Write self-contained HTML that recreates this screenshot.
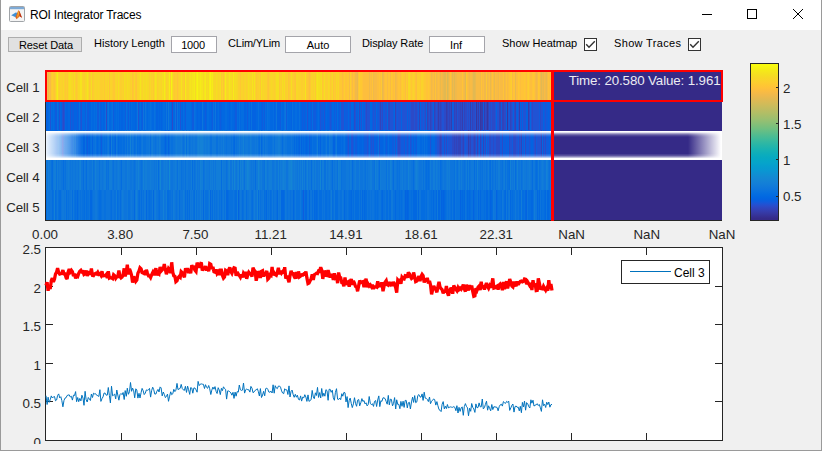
<!DOCTYPE html>
<html><head><meta charset="utf-8">
<style>
*{margin:0;padding:0;box-sizing:border-box}
html,body{width:822px;height:451px;overflow:hidden;background:#f0f0f0;font-family:"Liberation Sans",sans-serif;position:relative}
.a{position:absolute}
#title{left:0;top:0;width:822px;height:30px;background:#fff}
.bl{background:#9a9a9a}
.ttl{left:30px;top:7px;font-size:12px;letter-spacing:-0.2px;color:#000;white-space:nowrap;line-height:16px}
.ui{font-size:11px;color:#000;white-space:nowrap;line-height:13px}
.btn{background:#e1e1e1;border:1px solid #adadad}
.edit{background:#fff;border:1px solid #a4a4aa;text-align:center}
.chk{width:13px;height:13px;border:1px solid #333;background:#fff}
.cl{font-size:13.33px;letter-spacing:-0.15px;color:#262626;white-space:nowrap;line-height:16px;text-align:right;width:39.5px;left:0}
.xl{position:absolute;top:227px;width:80px;text-align:center;font-size:13.33px;color:#262626;line-height:16px;white-space:nowrap}
.yl{position:absolute;left:0;width:41px;text-align:right;font-size:13.33px;color:#262626;line-height:16px;white-space:nowrap}
.row{left:46px;width:506px;height:30px}
</style></head><body>
<div id="title" class="a"></div>
<!-- icon -->
<svg class="a" style="left:9px;top:6px" width="16" height="16" viewBox="0 0 16 16">
<rect x="0.5" y="0.5" width="15" height="15" rx="1" fill="#f4f4f4" stroke="#a0a4a8"/>
<rect x="1" y="1" width="14" height="2.2" fill="#7eaad6"/>
<path d="M2.2 9.3 L7.2 6.2 L8.6 8.2 L6.6 11.2 Z" fill="#3f8fd4"/>
<path d="M6.4 11.2 L9.3 4.2 L10.6 5.2 L13 11.8 L10.8 10.2 L7.6 13.2 Z" fill="#e0641c"/>
<path d="M10.2 5 L13 11.8 L11 10.4 Z" fill="#b5301a"/>
<path d="M8.2 10 L9.5 4.6 L10.1 7.2 L8.8 12.2 Z" fill="#f2b431"/>
</svg>
<div class="a ttl">ROI Integrator Traces</div>
<!-- window buttons -->
<div class="a" style="left:702px;top:14px;width:10px;height:1px;background:#000"></div>
<div class="a" style="left:747px;top:9px;width:10px;height:10px;border:1px solid #000"></div>
<svg class="a" style="left:792px;top:8px" width="12" height="12" viewBox="0 0 12 12"><path d="M1 1 L11 11 M11 1 L1 11" stroke="#000" stroke-width="1"/></svg>
<!-- borders -->
<div class="a bl" style="left:0;top:0;width:1px;height:451px"></div>
<div class="a bl" style="left:821px;top:0;width:1px;height:451px"></div>
<div class="a bl" style="left:0;top:450px;width:822px;height:1px"></div>

<!-- toolbar -->
<div class="a btn ui" style="left:8px;top:37px;width:74px;height:15px;text-align:center;padding-top:1px;padding-left:2px;letter-spacing:-0.1px">Reset Data</div>
<div class="a ui" style="left:94px;top:37px">History Length</div>
<div class="a edit ui" style="left:171px;top:36px;width:46px;height:17px;padding-top:2px;padding-right:2px;letter-spacing:-0.2px">1000</div>
<div class="a ui" style="left:228px;top:37px;letter-spacing:-0.2px">CLim/YLim</div>
<div class="a edit ui" style="left:285px;top:36px;width:66px;height:17px;padding-top:2px">Auto</div>
<div class="a ui" style="left:362px;top:37px;letter-spacing:-0.1px">Display Rate</div>
<div class="a edit ui" style="left:429px;top:36px;width:56px;height:17px;padding-top:2px;padding-right:2px">Inf</div>
<div class="a ui" style="left:502px;top:37px">Show Heatmap</div>
<div class="a chk" style="left:584px;top:38px"></div>
<svg class="a" style="left:584px;top:38px" width="13" height="13"><path d="M2.2 6.3 L5 9.3 L10.8 3.2" fill="none" stroke="#333" stroke-width="1.4"/></svg>
<div class="a ui" style="left:614px;top:37px;letter-spacing:0.35px">Show Traces</div>
<div class="a chk" style="left:688px;top:38px"></div>
<svg class="a" style="left:688px;top:38px" width="13" height="13"><path d="M2.2 6.3 L5 9.3 L10.8 3.2" fill="none" stroke="#333" stroke-width="1.4"/></svg>

<!-- heatmap -->
<div class="a row" style="top:70px;background:linear-gradient(90deg,#ffc337 0px 1px,#f8bb44 1px 2px,#e9b94e 2px 3px,#fdbe3d 3px 4px,#f8bb44 4px 5px,#fec832 5px 6px,#fcce2e 6px 7px,#fec832 7px 8px,#ffc337 8px 9px,#fcce2e 9px 10px,#f5de21 10px 11px,#f5eb18 11px 12px,#fad32a 12px 13px,#fcce2e 13px 14px,#fad32a 14px 16px,#fcce2e 16px 17px,#f7d826 17px 18px,#fcce2e 18px 19px,#fec832 19px 20px,#fcce2e 20px 21px,#fec832 21px 22px,#f7d826 22px 23px,#f5de21 23px 25px,#f7d826 25px 27px,#fcce2e 27px 28px,#f5de21 28px 29px,#fcce2e 29px 30px,#fec832 30px 31px,#fcce2e 31px 32px,#f7d826 32px 34px,#f5e41d 34px 36px,#fad32a 36px 38px,#fcce2e 38px 39px,#f7d826 39px 41px,#f5e41d 41px 42px,#f7d826 42px 43px,#fec832 43px 44px,#fcce2e 44px 45px,#f5de21 45px 46px,#fec832 46px 47px,#fcce2e 47px 48px,#fad32a 48px 49px,#f7d826 49px 50px,#fad32a 50px 52px,#f7d826 52px 53px,#fad32a 53px 54px,#fcce2e 54px 57px,#fad32a 57px 58px,#fec832 58px 59px,#fad32a 59px 61px,#fcce2e 61px 62px,#f7d826 62px 63px,#ffc337 63px 64px,#fad32a 64px 66px,#fcce2e 66px 67px,#fec832 67px 69px,#fad32a 69px 70px,#f7d826 70px 71px,#fcce2e 71px 72px,#f5de21 72px 73px,#fad32a 73px 74px,#fcce2e 74px 76px,#fad32a 76px 77px,#fcce2e 77px 78px,#f5de21 78px 79px,#f7d826 79px 80px,#fad32a 80px 81px,#f5de21 81px 82px,#f7d826 82px 84px,#fcce2e 84px 85px,#fad32a 85px 86px,#ffc337 86px 87px,#fec832 87px 88px,#f7d826 88px 89px,#fec832 89px 90px,#ffc337 90px 91px,#fad32a 91px 93px,#f7d826 93px 94px,#f5e41d 94px 95px,#f7d826 95px 96px,#fad32a 96px 97px,#f5de21 97px 98px,#f7d826 98px 100px,#f5de21 100px 101px,#f7d826 101px 103px,#fcce2e 103px 104px,#f7d826 104px 105px,#fcce2e 105px 106px,#fad32a 106px 107px,#fec832 107px 108px,#f7d826 108px 109px,#f5e41d 109px 110px,#f5de21 110px 111px,#fcce2e 111px 112px,#fad32a 112px 113px,#f7d826 113px 115px,#fad32a 115px 116px,#f5de21 116px 117px,#f7d826 117px 118px,#f5eb18 118px 119px,#f5de21 119px 120px,#fcce2e 120px 121px,#fad32a 121px 122px,#f7d826 122px 123px,#f5eb18 123px 124px,#fcce2e 124px 125px,#f6f313 125px 126px,#f5de21 126px 127px,#fcce2e 127px 128px,#fec832 128px 129px,#fcce2e 129px 131px,#ffc337 131px 132px,#fcce2e 132px 133px,#fad32a 133px 135px,#f5e41d 135px 136px,#fad32a 136px 138px,#fec832 138px 139px,#f5eb18 139px 140px,#f7d826 140px 141px,#fad32a 141px 143px,#f5de21 143px 144px,#f5e41d 144px 145px,#f5de21 145px 146px,#f5e41d 146px 148px,#f5eb18 148px 149px,#f7d826 149px 150px,#f5eb18 150px 151px,#f6f313 151px 152px,#f5e41d 152px 154px,#f5eb18 154px 155px,#f5e41d 155px 157px,#f7d826 157px 158px,#f5e41d 158px 159px,#f5eb18 159px 160px,#f7d826 160px 161px,#f5de21 161px 162px,#f7d826 162px 163px,#f5eb18 163px 164px,#f6f313 164px 165px,#f5e41d 165px 166px,#f5eb18 166px 167px,#f7d826 167px 169px,#fad32a 169px 170px,#f5de21 170px 171px,#f7d826 171px 172px,#fad32a 172px 173px,#f7d826 173px 174px,#f5de21 174px 175px,#fec832 175px 176px,#fad32a 176px 177px,#ffc337 177px 178px,#fad32a 178px 179px,#f5eb18 179px 180px,#f7d826 180px 181px,#fad32a 181px 182px,#f7d826 182px 183px,#f5e41d 183px 184px,#f5de21 184px 186px,#fad32a 186px 187px,#f5eb18 187px 188px,#f7d826 188px 189px,#f5de21 189px 190px,#f7d826 190px 192px,#fcce2e 192px 194px,#fec832 194px 195px,#fad32a 195px 197px,#fcce2e 197px 198px,#fad32a 198px 199px,#f7d826 199px 200px,#fcce2e 200px 201px,#fad32a 201px 202px,#f5de21 202px 203px,#f7d826 203px 205px,#fad32a 205px 206px,#f5e41d 206px 207px,#fad32a 207px 208px,#f5e41d 208px 209px,#fad32a 209px 210px,#fec832 210px 211px,#fcce2e 211px 213px,#fad32a 213px 214px,#fec832 214px 215px,#f5de21 215px 216px,#fad32a 216px 217px,#f7d826 217px 218px,#fad32a 218px 221px,#fec832 221px 222px,#ffc337 222px 223px,#fcce2e 223px 224px,#fad32a 224px 225px,#f7d826 225px 226px,#fad32a 226px 228px,#fcce2e 228px 229px,#fad32a 229px 230px,#f5de21 230px 233px,#fec832 233px 234px,#fad32a 234px 235px,#fcce2e 235px 236px,#f5de21 236px 237px,#fad32a 237px 238px,#f5de21 238px 239px,#fcce2e 239px 241px,#fad32a 241px 242px,#ffc337 242px 243px,#fec832 243px 244px,#fcce2e 244px 245px,#f5de21 245px 246px,#fcce2e 246px 248px,#fec832 248px 249px,#ffc337 249px 250px,#f7d826 250px 252px,#fad32a 252px 255px,#fcce2e 255px 257px,#fad32a 257px 258px,#fcce2e 258px 259px,#f5e41d 259px 260px,#fec832 260px 262px,#ffc337 262px 263px,#fdbe3d 263px 264px,#fec832 264px 265px,#fad32a 265px 267px,#fcce2e 267px 268px,#f7d826 268px 269px,#fec832 269px 270px,#f5de21 270px 271px,#f5e41d 271px 272px,#f5de21 272px 274px,#f7d826 274px 275px,#f5de21 275px 276px,#fec832 276px 277px,#fcce2e 277px 278px,#f5de21 278px 279px,#fcce2e 279px 282px,#f7d826 282px 283px,#fad32a 283px 284px,#fec832 284px 285px,#fcce2e 285px 286px,#f7d826 286px 287px,#ffc337 287px 288px,#fcce2e 288px 289px,#fec832 289px 290px,#f7d826 290px 291px,#fcce2e 291px 292px,#f7d826 292px 293px,#fec832 293px 296px,#fdbe3d 296px 297px,#ffc337 297px 298px,#fcce2e 298px 299px,#ffc337 299px 301px,#fec832 301px 303px,#f8bb44 303px 304px,#fcce2e 304px 305px,#ffc337 305px 306px,#f8bb44 306px 307px,#ffc337 307px 308px,#fdbe3d 308px 309px,#f1b94a 309px 311px,#e9b94e 311px 312px,#ffc337 312px 313px,#fcce2e 313px 314px,#fec832 314px 316px,#ffc337 316px 317px,#fdbe3d 317px 323px,#f1b94a 323px 324px,#fdbe3d 324px 325px,#f8bb44 325px 326px,#ffc337 326px 327px,#f1b94a 327px 328px,#f8bb44 328px 331px,#fdbe3d 331px 333px,#ffc337 333px 334px,#fdbe3d 334px 335px,#fec832 335px 336px,#e9b94e 336px 337px,#f1b94a 337px 338px,#fdbe3d 338px 339px,#ffc337 339px 341px,#f8bb44 341px 342px,#ffc337 342px 344px,#f8bb44 344px 345px,#fec832 345px 346px,#ffc337 346px 347px,#fdbe3d 347px 348px,#ffc337 348px 349px,#f1b94a 349px 350px,#f8bb44 350px 351px,#fdbe3d 351px 352px,#ffc337 352px 354px,#fdbe3d 354px 355px,#fec832 355px 356px,#fcce2e 356px 357px,#fec832 357px 359px,#fdbe3d 359px 360px,#fcce2e 360px 361px,#ffc337 361px 362px,#f7d826 362px 364px,#fcce2e 364px 365px,#fec832 365px 366px,#fcce2e 366px 367px,#fad32a 367px 368px,#fcce2e 368px 369px,#ffc337 369px 370px,#fdbe3d 370px 371px,#fcce2e 371px 374px,#fec832 374px 375px,#fad32a 375px 377px,#fcce2e 377px 378px,#fec832 378px 380px,#ffc337 380px 382px,#fec832 382px 383px,#ffc337 383px 384px,#fdbe3d 384px 385px,#f1b94a 385px 386px,#f8bb44 386px 387px,#fdbe3d 387px 388px,#f1b94a 388px 389px,#ffc337 389px 390px,#f1b94a 390px 391px,#f8bb44 391px 392px,#fdbe3d 392px 393px,#f8bb44 393px 394px,#e9b94e 394px 395px,#f8bb44 395px 396px,#f1b94a 396px 397px,#e9b94e 397px 398px,#e1b952 398px 400px,#f8bb44 400px 401px,#d9ba56 401px 402px,#e9b94e 402px 403px,#f8bb44 403px 404px,#ffc337 404px 405px,#f8bb44 405px 406px,#e1b952 406px 407px,#f1b94a 407px 408px,#e1b952 408px 409px,#f1b94a 409px 411px,#f8bb44 411px 416px,#ffc337 416px 417px,#f8bb44 417px 418px,#f1b94a 418px 419px,#e1b952 419px 420px,#fec832 420px 421px,#fdbe3d 421px 422px,#f8bb44 422px 423px,#f1b94a 423px 424px,#f8bb44 424px 426px,#f1b94a 426px 427px,#e1b952 427px 429px,#e9b94e 429px 430px,#f8bb44 430px 434px,#f1b94a 434px 435px,#ffc337 435px 436px,#f8bb44 436px 437px,#fdbe3d 437px 438px,#f1b94a 438px 440px,#fec832 440px 441px,#f1b94a 441px 442px,#f8bb44 442px 443px,#fdbe3d 443px 444px,#e9b94e 444px 445px,#f8bb44 445px 446px,#ffc337 446px 447px,#f8bb44 447px 448px,#e9b94e 448px 449px,#fdbe3d 449px 450px,#f8bb44 450px 452px,#f1b94a 452px 453px,#fdbe3d 453px 454px,#f8bb44 454px 457px,#ffc337 457px 458px,#f1b94a 458px 459px,#f8bb44 459px 460px,#ffc337 460px 461px,#f8bb44 461px 462px,#fdbe3d 462px 463px,#ffc337 463px 464px,#fec832 464px 465px,#fcce2e 465px 466px,#f8bb44 466px 467px,#ffc337 467px 469px,#e9b94e 469px 470px,#fdbe3d 470px 472px,#fec832 472px 473px,#ffc337 473px 474px,#fdbe3d 474px 475px,#ffc337 475px 478px,#fec832 478px 479px,#ffc337 479px 480px,#fdbe3d 480px 481px,#fec832 481px 482px,#fcce2e 482px 483px,#ffc337 483px 484px,#fdbe3d 484px 486px,#ffc337 486px 487px,#fec832 487px 488px,#ffc337 488px 489px,#f8bb44 489px 490px,#f1b94a 490px 491px,#f8bb44 491px 492px,#fec832 492px 493px,#ffc337 493px 494px,#f1b94a 494px 495px,#e1b952 495px 496px,#f1b94a 496px 497px,#e9b94e 497px 498px,#f8bb44 498px 499px,#f1b94a 499px 500px,#e9b94e 500px 501px,#f8bb44 501px 502px,#ffc337 502px 503px,#fdbe3d 503px 504px,#ffc337 504px 506px)"></div>
<div class="a row" style="top:100px;background:linear-gradient(90deg,#0363e1 0px 2px,#0268e1 2px 3px,#046de0 3px 4px,#2053d4 4px 5px,#046de0 5px 6px,#0268e1 6px 7px,#046de0 7px 8px,#0268e1 8px 9px,#0f5cdd 9px 11px,#0871de 11px 12px,#0268e1 12px 13px,#2053d4 13px 14px,#0268e1 14px 15px,#0363e1 15px 16px,#2053d4 16px 17px,#2c4ac7 17px 18px,#2053d4 18px 19px,#0268e1 19px 20px,#0363e1 20px 22px,#0268e1 22px 24px,#2053d4 24px 25px,#0363e1 25px 26px,#0f5cdd 26px 28px,#0363e1 28px 31px,#0f5cdd 31px 32px,#0363e1 32px 33px,#0871de 33px 34px,#0f5cdd 34px 35px,#2053d4 35px 36px,#0268e1 36px 39px,#0f5cdd 39px 40px,#046de0 40px 41px,#0f5cdd 41px 43px,#0363e1 43px 45px,#046de0 45px 46px,#0268e1 46px 48px,#046de0 48px 49px,#0268e1 49px 50px,#046de0 50px 51px,#0f5cdd 51px 53px,#046de0 53px 54px,#0f5cdd 54px 55px,#0363e1 55px 56px,#0268e1 56px 57px,#0363e1 57px 59px,#0871de 59px 60px,#2c4ac7 60px 61px,#046de0 61px 62px,#0d75dc 62px 63px,#0268e1 63px 65px,#046de0 65px 66px,#0871de 66px 67px,#0f5cdd 67px 68px,#0268e1 68px 70px,#046de0 70px 71px,#0268e1 71px 72px,#046de0 72px 73px,#0363e1 73px 74px,#0268e1 74px 75px,#0363e1 75px 77px,#0268e1 77px 79px,#0f5cdd 79px 80px,#0871de 80px 81px,#0268e1 81px 82px,#0f5cdd 82px 83px,#046de0 83px 84px,#0363e1 84px 85px,#046de0 85px 86px,#0268e1 86px 89px,#0363e1 89px 90px,#0268e1 90px 91px,#0d75dc 91px 92px,#2053d4 92px 93px,#0268e1 93px 94px,#046de0 94px 95px,#0363e1 95px 96px,#0f5cdd 96px 97px,#0d75dc 97px 98px,#0268e1 98px 99px,#0d75dc 99px 100px,#046de0 100px 101px,#0268e1 101px 102px,#046de0 102px 104px,#0871de 104px 105px,#046de0 105px 106px,#0268e1 106px 108px,#0871de 108px 109px,#046de0 109px 110px,#0363e1 110px 112px,#0268e1 112px 113px,#0363e1 113px 114px,#0268e1 114px 115px,#0363e1 115px 116px,#0268e1 116px 117px,#046de0 117px 119px,#0268e1 119px 120px,#0d75dc 120px 121px,#0268e1 121px 122px,#1079da 122px 123px,#046de0 123px 125px,#0363e1 125px 126px,#2c4ac7 126px 127px,#0268e1 127px 129px,#0d75dc 129px 130px,#0f5cdd 130px 131px,#0d75dc 131px 132px,#0268e1 132px 133px,#046de0 133px 134px,#2053d4 134px 135px,#0268e1 135px 136px,#0363e1 136px 137px,#046de0 137px 138px,#0268e1 138px 139px,#0f5cdd 139px 140px,#046de0 140px 145px,#0268e1 145px 146px,#0f5cdd 146px 148px,#0871de 148px 149px,#046de0 149px 150px,#0268e1 150px 151px,#0363e1 151px 152px,#0268e1 152px 154px,#0363e1 154px 156px,#0d75dc 156px 157px,#0268e1 157px 158px,#0363e1 158px 159px,#0f5cdd 159px 160px,#0363e1 160px 161px,#046de0 161px 163px,#0268e1 163px 165px,#0363e1 165px 166px,#0f5cdd 166px 167px,#0871de 167px 168px,#0268e1 168px 169px,#0d75dc 169px 170px,#0363e1 170px 171px,#0268e1 171px 172px,#046de0 172px 173px,#0363e1 173px 174px,#0f5cdd 174px 175px,#0363e1 175px 176px,#0268e1 176px 179px,#046de0 179px 181px,#0268e1 181px 183px,#0363e1 183px 184px,#0268e1 184px 185px,#046de0 185px 186px,#0268e1 186px 188px,#0363e1 188px 189px,#0f5cdd 189px 191px,#046de0 191px 192px,#0268e1 192px 193px,#0871de 193px 194px,#0268e1 194px 195px,#046de0 195px 198px,#0363e1 198px 200px,#0268e1 200px 201px,#0f5cdd 201px 202px,#0268e1 202px 203px,#046de0 203px 204px,#0363e1 204px 205px,#0871de 205px 206px,#0363e1 206px 210px,#0268e1 210px 212px,#0871de 212px 213px,#0268e1 213px 215px,#0363e1 215px 216px,#0f5cdd 216px 217px,#0268e1 217px 218px,#0f5cdd 218px 219px,#046de0 219px 220px,#0268e1 220px 221px,#0871de 221px 222px,#046de0 222px 224px,#0268e1 224px 227px,#046de0 227px 228px,#0363e1 228px 229px,#0268e1 229px 230px,#0d75dc 230px 231px,#0363e1 231px 234px,#0f5cdd 234px 235px,#046de0 235px 236px,#0268e1 236px 238px,#0871de 238px 239px,#0d75dc 239px 240px,#0f5cdd 240px 241px,#046de0 241px 242px,#0268e1 242px 245px,#0363e1 245px 246px,#0871de 246px 247px,#0268e1 247px 249px,#046de0 249px 251px,#0268e1 251px 253px,#0871de 253px 254px,#0268e1 254px 255px,#0363e1 255px 256px,#0f5cdd 256px 257px,#0363e1 257px 258px,#0f5cdd 258px 259px,#0363e1 259px 260px,#0268e1 260px 261px,#2053d4 261px 262px,#0363e1 262px 263px,#0268e1 263px 264px,#0363e1 264px 265px,#0f5cdd 265px 266px,#046de0 266px 267px,#0f5cdd 267px 270px,#0363e1 270px 271px,#0268e1 271px 272px,#046de0 272px 273px,#0363e1 273px 274px,#2053d4 274px 275px,#0f5cdd 275px 277px,#0363e1 277px 278px,#2053d4 278px 279px,#0363e1 279px 280px,#0268e1 280px 281px,#0363e1 281px 283px,#0f5cdd 283px 284px,#2053d4 284px 285px,#0f5cdd 285px 286px,#0268e1 286px 288px,#0f5cdd 288px 289px,#0268e1 289px 290px,#0f5cdd 290px 291px,#046de0 291px 292px,#0363e1 292px 293px,#0f5cdd 293px 294px,#0268e1 294px 295px,#2053d4 295px 298px,#0363e1 298px 299px,#0f5cdd 299px 302px,#0268e1 302px 303px,#0f5cdd 303px 304px,#2053d4 304px 305px,#0268e1 305px 307px,#0363e1 307px 308px,#2c4ac7 308px 309px,#2053d4 309px 310px,#0363e1 310px 311px,#0f5cdd 311px 312px,#0268e1 312px 313px,#2c4ac7 313px 314px,#0363e1 314px 315px,#2053d4 315px 316px,#0268e1 316px 317px,#0f5cdd 317px 318px,#0363e1 318px 319px,#2053d4 319px 320px,#2c4ac7 320px 321px,#2053d4 321px 324px,#0268e1 324px 326px,#0f5cdd 326px 327px,#2053d4 327px 328px,#0f5cdd 328px 329px,#2053d4 329px 330px,#0268e1 330px 331px,#0f5cdd 331px 333px,#2053d4 333px 334px,#3243ba 334px 335px,#2053d4 335px 336px,#2c4ac7 336px 337px,#0f5cdd 337px 339px,#2053d4 339px 341px,#0268e1 341px 342px,#2c4ac7 342px 344px,#2053d4 344px 347px,#0f5cdd 347px 348px,#0268e1 348px 349px,#3243ba 349px 350px,#2053d4 350px 351px,#0f5cdd 351px 352px,#2053d4 352px 355px,#0363e1 355px 356px,#2053d4 356px 361px,#0363e1 361px 362px,#2053d4 362px 363px,#0f5cdd 363px 364px,#2053d4 364px 365px,#2c4ac7 365px 368px,#2053d4 368px 369px,#2c4ac7 369px 371px,#2053d4 371px 372px,#0f5cdd 372px 373px,#3243ba 373px 374px,#0363e1 374px 375px,#2053d4 375px 377px,#0f5cdd 377px 378px,#2053d4 378px 379px,#2c4ac7 379px 380px,#0363e1 380px 381px,#3243ba 381px 382px,#2c4ac7 382px 383px,#2053d4 383px 384px,#3243ba 384px 385px,#2c4ac7 385px 386px,#2053d4 386px 387px,#0363e1 387px 388px,#3243ba 388px 389px,#2c4ac7 389px 390px,#2053d4 390px 391px,#2c4ac7 391px 392px,#353dad 392px 393px,#2c4ac7 393px 394px,#3243ba 394px 395px,#2c4ac7 395px 396px,#2053d4 396px 398px,#2c4ac7 398px 400px,#353dad 400px 401px,#3243ba 401px 402px,#2c4ac7 402px 403px,#3243ba 403px 404px,#2c4ac7 404px 405px,#353dad 405px 406px,#0f5cdd 406px 408px,#3243ba 408px 409px,#2c4ac7 409px 410px,#3243ba 410px 411px,#2053d4 411px 412px,#2c4ac7 412px 414px,#3243ba 414px 415px,#2c4ac7 415px 416px,#353dad 416px 417px,#2053d4 417px 418px,#3243ba 418px 419px,#2c4ac7 419px 421px,#2053d4 421px 422px,#2c4ac7 422px 423px,#2053d4 423px 424px,#353dad 424px 425px,#2053d4 425px 426px,#3243ba 426px 427px,#2c4ac7 427px 429px,#2053d4 429px 430px,#3637a0 430px 431px,#2c4ac7 431px 432px,#353dad 432px 433px,#2053d4 433px 434px,#3637a0 434px 435px,#353dad 435px 437px,#0f5cdd 437px 438px,#353dad 438px 439px,#2c4ac7 439px 440px,#3243ba 440px 441px,#3637a0 441px 442px,#3243ba 442px 443px,#2053d4 443px 444px,#2c4ac7 444px 445px,#2053d4 445px 446px,#2c4ac7 446px 449px,#2053d4 449px 450px,#0363e1 450px 451px,#2053d4 451px 453px,#3243ba 453px 455px,#0f5cdd 455px 456px,#3243ba 456px 458px,#2c4ac7 458px 460px,#0363e1 460px 461px,#3637a0 461px 462px,#2053d4 462px 463px,#0f5cdd 463px 464px,#3243ba 464px 465px,#2c4ac7 465px 466px,#2053d4 466px 467px,#0363e1 467px 468px,#2c4ac7 468px 469px,#3243ba 469px 470px,#0f5cdd 470px 471px,#0363e1 471px 472px,#2053d4 472px 473px,#353dad 473px 474px,#0363e1 474px 475px,#2053d4 475px 476px,#0363e1 476px 477px,#2053d4 477px 480px,#0363e1 480px 482px,#353dad 482px 483px,#2c4ac7 483px 484px,#0268e1 484px 485px,#2053d4 485px 486px,#2c4ac7 486px 487px,#2053d4 487px 493px,#0f5cdd 493px 494px,#2c4ac7 494px 495px,#2053d4 495px 497px,#0363e1 497px 498px,#0f5cdd 498px 499px,#2053d4 499px 500px,#0f5cdd 500px 502px,#0363e1 502px 503px,#0f5cdd 503px 504px,#0268e1 504px 505px,#0363e1 505px 506px)"></div>
<div class="a row" style="top:130px;background:linear-gradient(90deg,#0363e1 0px 2px,#0268e1 2px 3px,#0363e1 3px 4px,#0268e1 4px 9px,#0363e1 9px 11px,#0268e1 11px 12px,#0871de 12px 13px,#046de0 13px 15px,#0363e1 15px 16px,#2053d4 16px 17px,#0f5cdd 17px 18px,#0268e1 18px 20px,#046de0 20px 25px,#0268e1 25px 27px,#0871de 27px 28px,#046de0 28px 29px,#0d75dc 29px 30px,#0268e1 30px 31px,#046de0 31px 32px,#0268e1 32px 36px,#046de0 36px 37px,#0363e1 37px 39px,#0871de 39px 40px,#0363e1 40px 41px,#0f5cdd 41px 42px,#0268e1 42px 43px,#0363e1 43px 44px,#046de0 44px 45px,#0871de 45px 46px,#0363e1 46px 47px,#0871de 47px 49px,#0d75dc 49px 50px,#046de0 50px 51px,#0268e1 51px 52px,#046de0 52px 53px,#0871de 53px 54px,#0268e1 54px 55px,#0f5cdd 55px 56px,#046de0 56px 57px,#0871de 57px 58px,#046de0 58px 59px,#0871de 59px 60px,#046de0 60px 61px,#0d75dc 61px 62px,#1079da 62px 63px,#046de0 63px 64px,#0363e1 64px 65px,#127dd8 65px 66px,#046de0 66px 67px,#0871de 67px 68px,#046de0 68px 69px,#0363e1 69px 70px,#1079da 70px 71px,#0871de 71px 72px,#0268e1 72px 73px,#046de0 73px 76px,#0871de 76px 77px,#046de0 77px 79px,#0d75dc 79px 80px,#046de0 80px 81px,#1079da 81px 82px,#0871de 82px 84px,#1481d6 84px 85px,#0871de 85px 86px,#1079da 86px 87px,#0d75dc 87px 88px,#046de0 88px 89px,#0871de 89px 90px,#1079da 90px 91px,#046de0 91px 92px,#0871de 92px 93px,#046de0 93px 95px,#0d75dc 95px 96px,#1079da 96px 97px,#0871de 97px 100px,#0d75dc 100px 103px,#1079da 103px 104px,#046de0 104px 105px,#1079da 105px 106px,#127dd8 106px 107px,#0d75dc 107px 109px,#0871de 109px 110px,#0d75dc 110px 111px,#1079da 111px 112px,#0d75dc 112px 113px,#127dd8 113px 114px,#1079da 114px 115px,#0871de 115px 118px,#046de0 118px 119px,#0363e1 119px 120px,#046de0 120px 121px,#0871de 121px 122px,#0363e1 122px 123px,#046de0 123px 124px,#0d75dc 124px 125px,#0871de 125px 127px,#0d75dc 127px 129px,#1079da 129px 130px,#127dd8 130px 131px,#1079da 131px 135px,#127dd8 135px 136px,#0d75dc 136px 137px,#0871de 137px 138px,#0d75dc 138px 139px,#1481d6 139px 140px,#046de0 140px 141px,#127dd8 141px 142px,#1079da 142px 143px,#0871de 143px 144px,#0d75dc 144px 145px,#1079da 145px 146px,#0d75dc 146px 147px,#1079da 147px 149px,#0d75dc 149px 151px,#127dd8 151px 152px,#1481d6 152px 153px,#127dd8 153px 154px,#1481d6 154px 157px,#127dd8 157px 158px,#1079da 158px 159px,#127dd8 159px 160px,#1079da 160px 162px,#127dd8 162px 163px,#1079da 163px 164px,#0871de 164px 166px,#1079da 166px 170px,#0871de 170px 172px,#1079da 172px 173px,#0d75dc 173px 175px,#1079da 175px 176px,#0d75dc 176px 177px,#127dd8 177px 178px,#0d75dc 178px 180px,#0871de 180px 181px,#0d75dc 181px 185px,#0871de 185px 186px,#0d75dc 186px 187px,#046de0 187px 188px,#0268e1 188px 189px,#0d75dc 189px 190px,#0871de 190px 191px,#0d75dc 191px 193px,#127dd8 193px 194px,#0d75dc 194px 195px,#1079da 195px 197px,#1481d6 197px 198px,#0d75dc 198px 199px,#1079da 199px 202px,#0d75dc 202px 204px,#127dd8 204px 205px,#1079da 205px 206px,#0d75dc 206px 209px,#1079da 209px 210px,#0d75dc 210px 211px,#1079da 211px 212px,#0871de 212px 213px,#046de0 213px 214px,#1079da 214px 215px,#0268e1 215px 216px,#0871de 216px 217px,#1079da 217px 218px,#0871de 218px 219px,#1079da 219px 220px,#0d75dc 220px 222px,#0871de 222px 226px,#0d75dc 226px 227px,#1079da 227px 228px,#0871de 228px 229px,#1079da 229px 232px,#127dd8 232px 234px,#1079da 234px 235px,#0d75dc 235px 236px,#046de0 236px 237px,#0d75dc 237px 238px,#1079da 238px 239px,#0d75dc 239px 241px,#0871de 241px 245px,#0d75dc 245px 246px,#0871de 246px 248px,#0268e1 248px 249px,#0871de 249px 250px,#0268e1 250px 251px,#046de0 251px 252px,#0268e1 252px 253px,#0363e1 253px 254px,#0871de 254px 255px,#0363e1 255px 256px,#046de0 256px 257px,#0268e1 257px 258px,#046de0 258px 259px,#0268e1 259px 260px,#0363e1 260px 261px,#0268e1 261px 262px,#046de0 262px 263px,#0f5cdd 263px 264px,#0268e1 264px 266px,#0871de 266px 267px,#046de0 267px 270px,#0871de 270px 271px,#127dd8 271px 272px,#0268e1 272px 273px,#046de0 273px 274px,#0363e1 274px 275px,#0871de 275px 277px,#046de0 277px 279px,#0871de 279px 280px,#1079da 280px 281px,#046de0 281px 283px,#1079da 283px 284px,#0d75dc 284px 286px,#0871de 286px 287px,#0363e1 287px 289px,#0871de 289px 290px,#1079da 290px 291px,#0268e1 291px 295px,#046de0 295px 296px,#0268e1 296px 297px,#046de0 297px 298px,#0871de 298px 299px,#0268e1 299px 300px,#0363e1 300px 301px,#0f5cdd 301px 302px,#2053d4 302px 303px,#0363e1 303px 304px,#0268e1 304px 305px,#2053d4 305px 307px,#0f5cdd 307px 308px,#0268e1 308px 309px,#0f5cdd 309px 311px,#0363e1 311px 312px,#0268e1 312px 313px,#0363e1 313px 316px,#0268e1 316px 317px,#0363e1 317px 318px,#0f5cdd 318px 321px,#2053d4 321px 322px,#0f5cdd 322px 323px,#046de0 323px 324px,#0f5cdd 324px 325px,#2053d4 325px 326px,#0f5cdd 326px 327px,#2053d4 327px 328px,#0363e1 328px 330px,#0f5cdd 330px 331px,#0363e1 331px 332px,#0871de 332px 333px,#2053d4 333px 334px,#0363e1 334px 337px,#0268e1 337px 338px,#046de0 338px 339px,#0363e1 339px 340px,#0f5cdd 340px 341px,#0363e1 341px 342px,#046de0 342px 343px,#0363e1 343px 346px,#0f5cdd 346px 348px,#0268e1 348px 349px,#2053d4 349px 350px,#0268e1 350px 351px,#2053d4 351px 352px,#2c4ac7 352px 354px,#2053d4 354px 355px,#0f5cdd 355px 358px,#2053d4 358px 359px,#0363e1 359px 360px,#0f5cdd 360px 361px,#2053d4 361px 362px,#0f5cdd 362px 363px,#0268e1 363px 364px,#2053d4 364px 365px,#0f5cdd 365px 366px,#0268e1 366px 367px,#0f5cdd 367px 368px,#0268e1 368px 369px,#0363e1 369px 370px,#0f5cdd 370px 371px,#046de0 371px 374px,#0268e1 374px 376px,#046de0 376px 377px,#0268e1 377px 378px,#0871de 378px 379px,#0268e1 379px 380px,#046de0 380px 381px,#0268e1 381px 382px,#0363e1 382px 384px,#2053d4 384px 385px,#0363e1 385px 386px,#0268e1 386px 389px,#0f5cdd 389px 391px,#2053d4 391px 393px,#2c4ac7 393px 394px,#3243ba 394px 395px,#2c4ac7 395px 396px,#0f5cdd 396px 398px,#2c4ac7 398px 399px,#0f5cdd 399px 400px,#2c4ac7 400px 401px,#0f5cdd 401px 402px,#2053d4 402px 406px,#2c4ac7 406px 408px,#3243ba 408px 409px,#2c4ac7 409px 410px,#3243ba 410px 411px,#2c4ac7 411px 412px,#3243ba 412px 415px,#2053d4 415px 416px,#2c4ac7 416px 417px,#3243ba 417px 418px,#2053d4 418px 419px,#0f5cdd 419px 420px,#2053d4 420px 422px,#353dad 422px 423px,#2c4ac7 423px 424px,#3243ba 424px 425px,#2053d4 425px 427px,#2c4ac7 427px 428px,#3243ba 428px 429px,#2c4ac7 429px 430px,#0f5cdd 430px 431px,#3243ba 431px 432px,#2053d4 432px 433px,#0363e1 433px 434px,#3243ba 434px 435px,#2053d4 435px 436px,#0363e1 436px 437px,#3243ba 437px 438px,#0f5cdd 438px 439px,#2c4ac7 439px 440px,#0268e1 440px 441px,#2053d4 441px 442px,#0f5cdd 442px 443px,#2c4ac7 443px 445px,#2053d4 445px 447px,#2c4ac7 447px 448px,#2053d4 448px 450px,#2c4ac7 450px 454px,#0f5cdd 454px 456px,#2c4ac7 456px 457px,#0363e1 457px 458px,#0f5cdd 458px 460px,#0363e1 460px 461px,#0f5cdd 461px 462px,#0363e1 462px 463px,#2c4ac7 463px 464px,#2053d4 464px 466px,#0f5cdd 466px 467px,#2c4ac7 467px 470px,#2053d4 470px 472px,#0f5cdd 472px 473px,#2c4ac7 473px 474px,#2053d4 474px 475px,#3243ba 475px 476px,#0363e1 476px 477px,#2053d4 477px 478px,#0268e1 478px 479px,#2c4ac7 479px 480px,#0f5cdd 480px 483px,#2053d4 483px 484px,#0f5cdd 484px 485px,#0363e1 485px 487px,#0f5cdd 487px 488px,#2053d4 488px 489px,#2c4ac7 489px 490px,#0f5cdd 490px 491px,#2053d4 491px 495px,#3243ba 495px 496px,#0268e1 496px 497px,#2c4ac7 497px 498px,#0f5cdd 498px 499px,#2c4ac7 499px 500px,#0f5cdd 500px 503px,#0363e1 503px 504px,#0f5cdd 504px 506px)"></div>
<div class="a row" style="top:160px;background:linear-gradient(90deg,#1079da 0px 1px,#0d75dc 1px 2px,#127dd8 2px 3px,#1079da 3px 5px,#0871de 5px 6px,#046de0 6px 7px,#1079da 7px 8px,#127dd8 8px 10px,#0871de 10px 11px,#127dd8 11px 12px,#0d75dc 12px 13px,#1079da 13px 15px,#0d75dc 15px 17px,#046de0 17px 18px,#0d75dc 18px 19px,#0871de 19px 20px,#1079da 20px 22px,#127dd8 22px 23px,#1079da 23px 24px,#0d75dc 24px 25px,#1079da 25px 26px,#0d75dc 26px 27px,#1079da 27px 29px,#0d75dc 29px 30px,#1079da 30px 32px,#0d75dc 32px 33px,#127dd8 33px 34px,#1481d6 34px 35px,#0d75dc 35px 37px,#046de0 37px 38px,#1079da 38px 39px,#0d75dc 39px 40px,#046de0 40px 41px,#1079da 41px 43px,#0d75dc 43px 46px,#127dd8 46px 47px,#0871de 47px 48px,#0d75dc 48px 49px,#1481d6 49px 50px,#1079da 50px 53px,#0871de 53px 54px,#1079da 54px 56px,#0d75dc 56px 57px,#1079da 57px 58px,#127dd8 58px 60px,#0871de 60px 61px,#0d75dc 61px 62px,#0871de 62px 63px,#127dd8 63px 66px,#0d75dc 66px 67px,#0871de 67px 68px,#1079da 68px 70px,#0d75dc 70px 71px,#1079da 71px 72px,#127dd8 72px 73px,#1079da 73px 74px,#0d75dc 74px 75px,#046de0 75px 76px,#1079da 76px 79px,#0d75dc 79px 81px,#127dd8 81px 82px,#1079da 82px 84px,#0d75dc 84px 86px,#1079da 86px 87px,#0d75dc 87px 88px,#0871de 88px 89px,#0d75dc 89px 90px,#127dd8 90px 91px,#1079da 91px 92px,#1481d6 92px 93px,#1079da 93px 94px,#0d75dc 94px 95px,#0871de 95px 96px,#0d75dc 96px 97px,#1481d6 97px 98px,#1079da 98px 99px,#127dd8 99px 101px,#1079da 101px 104px,#127dd8 104px 105px,#1079da 105px 108px,#0d75dc 108px 109px,#1079da 109px 110px,#0d75dc 110px 111px,#127dd8 111px 112px,#046de0 112px 113px,#1079da 113px 114px,#1485d4 114px 115px,#0d75dc 115px 117px,#1079da 117px 118px,#127dd8 118px 119px,#1079da 119px 120px,#127dd8 120px 121px,#1079da 121px 122px,#0d75dc 122px 123px,#1389d3 123px 124px,#1079da 124px 125px,#0d75dc 125px 127px,#1079da 127px 129px,#127dd8 129px 130px,#1079da 130px 131px,#0871de 131px 132px,#127dd8 132px 133px,#1079da 133px 135px,#0871de 135px 136px,#0d75dc 136px 138px,#1079da 138px 139px,#0871de 139px 140px,#1079da 140px 142px,#0d75dc 142px 145px,#127dd8 145px 146px,#046de0 146px 147px,#1079da 147px 148px,#0871de 148px 149px,#0d75dc 149px 150px,#127dd8 150px 151px,#0d75dc 151px 152px,#1079da 152px 153px,#0d75dc 153px 154px,#1481d6 154px 155px,#127dd8 155px 157px,#0871de 157px 158px,#0d75dc 158px 159px,#127dd8 159px 160px,#1079da 160px 163px,#0d75dc 163px 164px,#127dd8 164px 165px,#1079da 165px 166px,#127dd8 166px 167px,#0d75dc 167px 168px,#127dd8 168px 169px,#0d75dc 169px 170px,#127dd8 170px 175px,#046de0 175px 176px,#127dd8 176px 177px,#1079da 177px 180px,#0871de 180px 181px,#0d75dc 181px 182px,#127dd8 182px 183px,#1481d6 183px 184px,#0d75dc 184px 186px,#1481d6 186px 187px,#0d75dc 187px 188px,#1485d4 188px 189px,#1079da 189px 190px,#0d75dc 190px 191px,#127dd8 191px 192px,#1481d6 192px 193px,#0871de 193px 194px,#1481d6 194px 195px,#1079da 195px 196px,#1481d6 196px 197px,#1079da 197px 198px,#0871de 198px 199px,#127dd8 199px 201px,#1485d4 201px 202px,#1481d6 202px 203px,#127dd8 203px 204px,#1079da 204px 205px,#0d75dc 205px 206px,#1079da 206px 207px,#0d75dc 207px 208px,#1079da 208px 209px,#046de0 209px 210px,#1079da 210px 212px,#1485d4 212px 213px,#127dd8 213px 214px,#1079da 214px 215px,#127dd8 215px 216px,#0d75dc 216px 218px,#0871de 218px 219px,#1481d6 219px 220px,#127dd8 220px 221px,#0d75dc 221px 222px,#1079da 222px 223px,#127dd8 223px 226px,#0d75dc 226px 228px,#1079da 228px 229px,#127dd8 229px 230px,#0d75dc 230px 232px,#1481d6 232px 233px,#0d75dc 233px 234px,#127dd8 234px 235px,#1079da 235px 236px,#127dd8 236px 237px,#1481d6 237px 238px,#127dd8 238px 240px,#0d75dc 240px 242px,#127dd8 242px 243px,#1481d6 243px 245px,#1485d4 245px 246px,#127dd8 246px 247px,#1079da 247px 248px,#127dd8 248px 249px,#1079da 249px 251px,#0d75dc 251px 252px,#127dd8 252px 253px,#0d75dc 253px 254px,#127dd8 254px 255px,#0d75dc 255px 256px,#1481d6 256px 257px,#0d75dc 257px 258px,#127dd8 258px 259px,#0871de 259px 260px,#1079da 260px 261px,#1481d6 261px 262px,#0d75dc 262px 263px,#1079da 263px 265px,#046de0 265px 266px,#1079da 266px 267px,#127dd8 267px 268px,#0d75dc 268px 269px,#127dd8 269px 270px,#0d75dc 270px 272px,#1079da 272px 273px,#0d75dc 273px 274px,#1485d4 274px 275px,#0871de 275px 276px,#127dd8 276px 278px,#0871de 278px 280px,#127dd8 280px 281px,#0d75dc 281px 282px,#1079da 282px 283px,#127dd8 283px 284px,#1079da 284px 285px,#0d75dc 285px 286px,#046de0 286px 287px,#1079da 287px 288px,#0d75dc 288px 289px,#1079da 289px 291px,#0871de 291px 292px,#1481d6 292px 293px,#127dd8 293px 295px,#0871de 295px 296px,#0d75dc 296px 300px,#1079da 300px 303px,#0d75dc 303px 304px,#127dd8 304px 305px,#1079da 305px 306px,#046de0 306px 307px,#0d75dc 307px 308px,#1079da 308px 309px,#127dd8 309px 310px,#0d75dc 310px 313px,#127dd8 313px 314px,#0d75dc 314px 317px,#1079da 317px 318px,#0d75dc 318px 319px,#0871de 319px 320px,#1079da 320px 321px,#0d75dc 321px 322px,#1079da 322px 324px,#127dd8 324px 326px,#0d75dc 326px 328px,#0871de 328px 329px,#1481d6 329px 330px,#1079da 330px 331px,#127dd8 331px 332px,#0d75dc 332px 333px,#046de0 333px 334px,#127dd8 334px 335px,#1079da 335px 340px,#0871de 340px 341px,#127dd8 341px 342px,#0d75dc 342px 344px,#1481d6 344px 345px,#127dd8 345px 346px,#0d75dc 346px 347px,#046de0 347px 348px,#1079da 348px 350px,#0d75dc 350px 351px,#0871de 351px 352px,#0d75dc 352px 353px,#0871de 353px 354px,#1079da 354px 356px,#127dd8 356px 357px,#0d75dc 357px 358px,#1079da 358px 360px,#0d75dc 360px 362px,#1481d6 362px 363px,#1079da 363px 365px,#0d75dc 365px 367px,#046de0 367px 368px,#0d75dc 368px 369px,#127dd8 369px 370px,#1481d6 370px 371px,#127dd8 371px 372px,#1079da 372px 373px,#0d75dc 373px 376px,#1079da 376px 377px,#0871de 377px 378px,#1079da 378px 379px,#0871de 379px 380px,#046de0 380px 381px,#0871de 381px 382px,#046de0 382px 383px,#0871de 383px 384px,#127dd8 384px 385px,#0d75dc 385px 387px,#127dd8 387px 389px,#0d75dc 389px 390px,#127dd8 390px 391px,#1079da 391px 392px,#0d75dc 392px 393px,#1079da 393px 394px,#046de0 394px 395px,#0871de 395px 396px,#0d75dc 396px 397px,#1079da 397px 398px,#0d75dc 398px 400px,#1079da 400px 401px,#127dd8 401px 402px,#1079da 402px 403px,#127dd8 403px 404px,#0d75dc 404px 408px,#0871de 408px 409px,#127dd8 409px 410px,#0d75dc 410px 411px,#0871de 411px 412px,#1079da 412px 413px,#127dd8 413px 414px,#0d75dc 414px 415px,#127dd8 415px 416px,#0d75dc 416px 418px,#0871de 418px 419px,#0d75dc 419px 420px,#127dd8 420px 421px,#0871de 421px 422px,#127dd8 422px 423px,#0871de 423px 424px,#0d75dc 424px 425px,#1079da 425px 428px,#046de0 428px 429px,#1079da 429px 430px,#0871de 430px 431px,#1481d6 431px 432px,#0d75dc 432px 434px,#0871de 434px 435px,#0d75dc 435px 436px,#0871de 436px 437px,#1079da 437px 438px,#0d75dc 438px 439px,#1079da 439px 440px,#0871de 440px 441px,#0d75dc 441px 442px,#127dd8 442px 443px,#0871de 443px 444px,#046de0 444px 445px,#1079da 445px 446px,#0871de 446px 447px,#0d75dc 447px 448px,#1079da 448px 449px,#0871de 449px 450px,#1079da 450px 451px,#0d75dc 451px 452px,#127dd8 452px 454px,#0d75dc 454px 456px,#0871de 456px 457px,#1079da 457px 458px,#127dd8 458px 459px,#0871de 459px 460px,#1079da 460px 461px,#0871de 461px 463px,#046de0 463px 464px,#1481d6 464px 465px,#0d75dc 465px 466px,#1079da 466px 467px,#0d75dc 467px 468px,#127dd8 468px 469px,#046de0 469px 470px,#0d75dc 470px 471px,#1481d6 471px 472px,#0d75dc 472px 474px,#1079da 474px 475px,#0871de 475px 476px,#0d75dc 476px 477px,#127dd8 477px 478px,#1079da 478px 480px,#0d75dc 480px 481px,#1079da 481px 483px,#127dd8 483px 484px,#1079da 484px 485px,#0d75dc 485px 486px,#046de0 486px 487px,#1079da 487px 489px,#0871de 489px 490px,#046de0 490px 491px,#0871de 491px 492px,#127dd8 492px 493px,#0871de 493px 494px,#0d75dc 494px 495px,#1079da 495px 496px,#127dd8 496px 497px,#1079da 497px 498px,#0d75dc 498px 500px,#1481d6 500px 501px,#127dd8 501px 502px,#0d75dc 502px 503px,#0871de 503px 504px,#0d75dc 504px 505px,#1079da 505px 506px)"></div>
<div class="a row" style="top:190px;background:linear-gradient(90deg,#046de0 0px 1px,#1079da 1px 2px,#0d75dc 2px 6px,#046de0 6px 7px,#0871de 7px 8px,#1481d6 8px 9px,#046de0 9px 10px,#0871de 10px 11px,#1079da 11px 12px,#0871de 12px 13px,#046de0 13px 15px,#0d75dc 15px 16px,#1079da 16px 18px,#0d75dc 18px 19px,#1079da 19px 20px,#046de0 20px 21px,#0d75dc 21px 22px,#0871de 22px 23px,#0d75dc 23px 25px,#1079da 25px 26px,#046de0 26px 27px,#1079da 27px 28px,#0871de 28px 29px,#046de0 29px 30px,#0871de 30px 31px,#0268e1 31px 32px,#0871de 32px 33px,#0d75dc 33px 34px,#0871de 34px 35px,#0d75dc 35px 36px,#0871de 36px 38px,#046de0 38px 39px,#0d75dc 39px 40px,#046de0 40px 41px,#0871de 41px 43px,#0d75dc 43px 44px,#0268e1 44px 46px,#0871de 46px 47px,#0d75dc 47px 49px,#1079da 49px 51px,#0d75dc 51px 52px,#0871de 52px 53px,#046de0 53px 55px,#0871de 55px 56px,#0d75dc 56px 58px,#0871de 58px 60px,#0d75dc 60px 64px,#0871de 64px 65px,#046de0 65px 66px,#0d75dc 66px 68px,#0871de 68px 70px,#127dd8 70px 71px,#046de0 71px 72px,#0871de 72px 73px,#0d75dc 73px 74px,#046de0 74px 75px,#0d75dc 75px 76px,#127dd8 76px 77px,#1079da 77px 78px,#0d75dc 78px 81px,#1079da 81px 82px,#0871de 82px 84px,#0d75dc 84px 85px,#1079da 85px 86px,#0d75dc 86px 88px,#0268e1 88px 89px,#1079da 89px 90px,#1481d6 90px 91px,#1079da 91px 92px,#0871de 92px 93px,#046de0 93px 94px,#0d75dc 94px 95px,#046de0 95px 96px,#0d75dc 96px 97px,#0871de 97px 98px,#1079da 98px 100px,#0268e1 100px 101px,#0d75dc 101px 102px,#0871de 102px 103px,#046de0 103px 104px,#0871de 104px 106px,#1079da 106px 107px,#0268e1 107px 108px,#1079da 108px 109px,#127dd8 109px 110px,#0d75dc 110px 112px,#0871de 112px 113px,#046de0 113px 114px,#0d75dc 114px 117px,#1481d6 117px 118px,#0d75dc 118px 120px,#127dd8 120px 121px,#046de0 121px 123px,#0871de 123px 125px,#0d75dc 125px 126px,#0871de 126px 127px,#127dd8 127px 128px,#1079da 128px 129px,#0d75dc 129px 130px,#0871de 130px 131px,#0d75dc 131px 132px,#1079da 132px 133px,#046de0 133px 134px,#0d75dc 134px 137px,#127dd8 137px 138px,#1079da 138px 139px,#046de0 139px 140px,#0d75dc 140px 141px,#046de0 141px 142px,#0d75dc 142px 143px,#046de0 143px 144px,#1079da 144px 145px,#0d75dc 145px 146px,#1079da 146px 147px,#0871de 147px 148px,#046de0 148px 149px,#127dd8 149px 150px,#0871de 150px 151px,#1079da 151px 152px,#0d75dc 152px 154px,#127dd8 154px 155px,#0d75dc 155px 156px,#1079da 156px 157px,#0268e1 157px 158px,#1079da 158px 159px,#0871de 159px 162px,#0d75dc 162px 163px,#127dd8 163px 164px,#0268e1 164px 165px,#0d75dc 165px 166px,#046de0 166px 167px,#1079da 167px 168px,#0871de 168px 169px,#0d75dc 169px 170px,#0871de 170px 171px,#0d75dc 171px 172px,#1079da 172px 173px,#0871de 173px 174px,#0d75dc 174px 175px,#046de0 175px 176px,#0d75dc 176px 177px,#1079da 177px 178px,#0871de 178px 179px,#1079da 179px 180px,#0268e1 180px 182px,#046de0 182px 183px,#0871de 183px 187px,#0d75dc 187px 188px,#0871de 188px 189px,#046de0 189px 191px,#127dd8 191px 192px,#0363e1 192px 193px,#0871de 193px 194px,#1079da 194px 195px,#0d75dc 195px 196px,#046de0 196px 197px,#0871de 197px 198px,#1079da 198px 200px,#046de0 200px 201px,#0d75dc 201px 203px,#1079da 203px 205px,#0871de 205px 206px,#046de0 206px 207px,#0d75dc 207px 208px,#127dd8 208px 209px,#0d75dc 209px 211px,#1481d6 211px 212px,#046de0 212px 213px,#1079da 213px 214px,#0871de 214px 215px,#0d75dc 215px 217px,#1079da 217px 218px,#046de0 218px 219px,#0871de 219px 220px,#0268e1 220px 221px,#0d75dc 221px 222px,#0871de 222px 223px,#0d75dc 223px 224px,#046de0 224px 225px,#0871de 225px 226px,#1079da 226px 227px,#0871de 227px 228px,#0d75dc 228px 230px,#0871de 230px 231px,#0268e1 231px 232px,#1079da 232px 233px,#0d75dc 233px 234px,#1079da 234px 235px,#0268e1 235px 238px,#046de0 238px 239px,#1079da 239px 240px,#0d75dc 240px 241px,#0871de 241px 242px,#0d75dc 242px 244px,#0871de 244px 245px,#0d75dc 245px 247px,#0268e1 247px 248px,#0871de 248px 249px,#1079da 249px 250px,#0871de 250px 254px,#1079da 254px 255px,#0871de 255px 256px,#046de0 256px 257px,#0f5cdd 257px 258px,#0871de 258px 259px,#0268e1 259px 261px,#0d75dc 261px 263px,#0268e1 263px 264px,#0d75dc 264px 266px,#046de0 266px 267px,#0d75dc 267px 268px,#0268e1 268px 269px,#046de0 269px 270px,#0268e1 270px 271px,#046de0 271px 272px,#0d75dc 272px 273px,#046de0 273px 276px,#0d75dc 276px 277px,#0871de 277px 278px,#0d75dc 278px 279px,#046de0 279px 281px,#0871de 281px 283px,#046de0 283px 284px,#0d75dc 284px 285px,#127dd8 285px 286px,#046de0 286px 287px,#0871de 287px 288px,#1079da 288px 289px,#046de0 289px 292px,#0d75dc 292px 294px,#0871de 294px 296px,#1079da 296px 297px,#0d75dc 297px 298px,#0268e1 298px 299px,#0871de 299px 301px,#0d75dc 301px 302px,#0871de 302px 303px,#046de0 303px 305px,#0268e1 305px 306px,#0871de 306px 307px,#046de0 307px 308px,#0d75dc 308px 309px,#046de0 309px 313px,#0d75dc 313px 314px,#046de0 314px 315px,#0d75dc 315px 316px,#0268e1 316px 317px,#0871de 317px 318px,#0268e1 318px 319px,#046de0 319px 321px,#0d75dc 321px 322px,#0871de 322px 324px,#0d75dc 324px 325px,#0871de 325px 326px,#0d75dc 326px 328px,#0871de 328px 329px,#046de0 329px 330px,#0871de 330px 331px,#046de0 331px 332px,#0871de 332px 333px,#0d75dc 333px 335px,#046de0 335px 336px,#0268e1 336px 337px,#0871de 337px 339px,#0d75dc 339px 340px,#046de0 340px 342px,#0d75dc 342px 343px,#046de0 343px 345px,#1079da 345px 347px,#0871de 347px 349px,#0268e1 349px 350px,#0871de 350px 353px,#046de0 353px 354px,#0871de 354px 355px,#046de0 355px 356px,#0871de 356px 357px,#0d75dc 357px 358px,#0871de 358px 359px,#0363e1 359px 360px,#0268e1 360px 361px,#0363e1 361px 362px,#0268e1 362px 363px,#0871de 363px 365px,#046de0 365px 366px,#0871de 366px 367px,#0268e1 367px 371px,#0d75dc 371px 372px,#0268e1 372px 373px,#0d75dc 373px 375px,#046de0 375px 379px,#0871de 379px 380px,#046de0 380px 381px,#0d75dc 381px 383px,#0871de 383px 385px,#046de0 385px 386px,#0871de 386px 387px,#0268e1 387px 388px,#0871de 388px 390px,#0268e1 390px 391px,#1079da 391px 392px,#0268e1 392px 394px,#0871de 394px 395px,#0363e1 395px 396px,#0268e1 396px 397px,#0363e1 397px 398px,#0268e1 398px 399px,#046de0 399px 400px,#0871de 400px 401px,#0d75dc 401px 402px,#0871de 402px 403px,#0d75dc 403px 404px,#0871de 404px 405px,#046de0 405px 406px,#0d75dc 406px 407px,#046de0 407px 408px,#0268e1 408px 409px,#0d75dc 409px 410px,#0871de 410px 414px,#0363e1 414px 415px,#046de0 415px 416px,#0268e1 416px 417px,#046de0 417px 418px,#0268e1 418px 419px,#0d75dc 419px 420px,#0871de 420px 421px,#0268e1 421px 422px,#046de0 422px 423px,#0268e1 423px 424px,#046de0 424px 425px,#0871de 425px 427px,#0363e1 427px 428px,#046de0 428px 429px,#0871de 429px 431px,#0d75dc 431px 432px,#0268e1 432px 433px,#0871de 433px 434px,#0268e1 434px 435px,#0871de 435px 438px,#046de0 438px 439px,#0871de 439px 440px,#0268e1 440px 442px,#0871de 442px 443px,#046de0 443px 444px,#0363e1 444px 445px,#0268e1 445px 446px,#046de0 446px 447px,#1079da 447px 448px,#0d75dc 448px 450px,#0363e1 450px 451px,#046de0 451px 452px,#0871de 452px 455px,#046de0 455px 456px,#1079da 456px 457px,#0d75dc 457px 458px,#046de0 458px 459px,#0268e1 459px 460px,#1079da 460px 461px,#046de0 461px 462px,#0d75dc 462px 463px,#1079da 463px 464px,#0268e1 464px 465px,#0871de 465px 466px,#046de0 466px 467px,#0871de 467px 469px,#1079da 469px 470px,#0871de 470px 472px,#0d75dc 472px 473px,#046de0 473px 475px,#127dd8 475px 476px,#046de0 476px 478px,#0871de 478px 479px,#0268e1 479px 480px,#0363e1 480px 481px,#0d75dc 481px 482px,#046de0 482px 485px,#0268e1 485px 487px,#0871de 487px 488px,#127dd8 488px 489px,#0d75dc 489px 491px,#0268e1 491px 492px,#0871de 492px 493px,#0268e1 493px 494px,#0d75dc 494px 495px,#046de0 495px 496px,#0871de 496px 498px,#046de0 498px 499px,#0268e1 499px 500px,#0d75dc 500px 501px,#0268e1 501px 503px,#046de0 503px 505px,#0871de 505px 506px)"></div>
<div class="a" style="left:552px;top:70px;width:170px;height:150px;background:#352a87"></div>
<!-- row3 white fade overlay -->
<div class="a" style="left:46px;top:131px;width:676px;height:29px;background:linear-gradient(180deg,#fff 0px,#fff 1px,rgba(255,255,255,0.55) 2.5px,rgba(255,255,255,0.2) 4px,rgba(255,255,255,0) 6px,rgba(255,255,255,0) 22.5px,rgba(255,255,255,0.2) 24.5px,rgba(255,255,255,0.55) 26px,#fff 27.5px,#fff 29px)"></div>
<div class="a" style="left:46px;top:131px;width:676px;height:29px;background:linear-gradient(90deg,rgba(255,255,255,0.92) 0px,rgba(255,255,255,0) 37px,rgba(255,255,255,0) 642px,#fff 675px)"></div>
<div class="a" style="left:45px;top:70px;width:1px;height:151px;background:#262626"></div>
<div class="a" style="left:45px;top:220px;width:677px;height:1px;background:#262626"></div>
<div class="a" style="left:45px;top:70px;width:678px;height:32px;border:2px solid #f00"></div>
<div class="a" style="left:551px;top:70px;width:3px;height:151px;background:#f00"></div>
<div class="a" style="left:560px;top:73px;width:160.5px;text-align:right;font-size:13.33px;letter-spacing:-0.12px;color:#ebebf2;line-height:16px;white-space:nowrap">Time: 20.580 Value: 1.961</div>
<div class="a cl" style="top:80px">Cell 1</div>
<div class="a cl" style="top:110px">Cell 2</div>
<div class="a cl" style="top:140px">Cell 3</div>
<div class="a cl" style="top:170px">Cell 4</div>
<div class="a cl" style="top:200px">Cell 5</div>
<div class="xl" style="left:5.0px">0.00</div><div class="xl" style="left:80.2px">3.80</div><div class="xl" style="left:155.4px">7.50</div><div class="xl" style="left:230.7px">11.21</div><div class="xl" style="left:305.9px">14.91</div><div class="xl" style="left:381.1px">18.61</div><div class="xl" style="left:456.3px">22.31</div><div class="xl" style="left:531.6px">NaN</div><div class="xl" style="left:606.8px">NaN</div><div class="xl" style="left:682.0px">NaN</div>

<!-- colorbar -->
<div class="a" style="left:750px;top:63px;width:29px;height:158px;border:1px solid #262626;background:linear-gradient(0deg,#352a87 0.78%,#363093 2.34%,#3637a0 3.91%,#353dad 5.47%,#3243ba 7.03%,#2c4ac7 8.59%,#2053d4 10.16%,#0f5cdd 11.72%,#0363e1 13.28%,#0268e1 14.84%,#046de0 16.41%,#0871de 17.97%,#0d75dc 19.53%,#1079da 21.09%,#127dd8 22.66%,#1481d6 24.22%,#1485d4 25.78%,#1389d3 27.34%,#108ed2 28.91%,#0c93d2 30.47%,#0998d1 32.03%,#079ccf 33.59%,#06a0cd 35.16%,#06a4ca 36.72%,#06a7c6 38.28%,#07a9c2 39.84%,#0aacbe 41.41%,#0faeb9 42.97%,#15b1b4 44.53%,#1db3af 46.09%,#25b5a9 47.66%,#2eb7a4 49.22%,#38b99e 50.78%,#42bb98 52.34%,#4dbc92 53.91%,#59bd8c 55.47%,#65be86 57.03%,#71bf80 58.59%,#7cbf7b 60.16%,#87bf77 61.72%,#92bf73 63.28%,#9cbf6f 64.84%,#a5be6b 66.41%,#aebe67 67.97%,#b7bd64 69.53%,#c0bc60 71.09%,#c8bc5d 72.66%,#d1bb59 74.22%,#d9ba56 75.78%,#e1b952 77.34%,#e9b94e 78.91%,#f1b94a 80.47%,#f8bb44 82.03%,#fdbe3d 83.59%,#ffc337 85.16%,#fec832 86.72%,#fcce2e 88.28%,#fad32a 89.84%,#f7d826 91.41%,#f5de21 92.97%,#f5e41d 94.53%,#f5eb18 96.09%,#f6f313 97.66%,#f9fb0e 99.22%)"></div>
<svg class="a" style="left:750px;top:63px" width="29" height="158"><g stroke="#262626" stroke-width="1">
<line x1="26" y1="24.5" x2="28" y2="24.5"/><line x1="26" y1="60.5" x2="28" y2="60.5"/><line x1="26" y1="96.5" x2="28" y2="96.5"/><line x1="26" y1="133.5" x2="28" y2="133.5"/></g></svg>
<div class="a" style="left:783px;top:81px;font-size:13.33px;color:#262626;line-height:16px">2</div>
<div class="a" style="left:783px;top:117px;font-size:13.33px;color:#262626;line-height:16px">1.5</div>
<div class="a" style="left:783px;top:153px;font-size:13.33px;color:#262626;line-height:16px">1</div>
<div class="a" style="left:783px;top:189px;font-size:13.33px;color:#262626;line-height:16px">0.5</div>

<!-- traces axes -->
<div class="a" style="left:45px;top:247px;width:678px;height:194px;background:#fff;border:1px solid #262626"></div>
<svg class="a" style="left:45px;top:247px;overflow:visible" width="678" height="194">
<g stroke="#262626" stroke-width="1"><line x1="76.5" y1="0" x2="76.5" y2="8"/><line x1="151.5" y1="0" x2="151.5" y2="8"/><line x1="226.5" y1="0" x2="226.5" y2="8"/><line x1="301.5" y1="0" x2="301.5" y2="8"/><line x1="376.5" y1="0" x2="376.5" y2="8"/><line x1="451.5" y1="0" x2="451.5" y2="8"/><line x1="526.5" y1="0" x2="526.5" y2="8"/><line x1="601.5" y1="0" x2="601.5" y2="8"/><line x1="76.5" y1="193" x2="76.5" y2="186"/><line x1="151.5" y1="193" x2="151.5" y2="186"/><line x1="226.5" y1="193" x2="226.5" y2="186"/><line x1="301.5" y1="193" x2="301.5" y2="186"/><line x1="376.5" y1="193" x2="376.5" y2="186"/><line x1="451.5" y1="193" x2="451.5" y2="186"/><line x1="526.5" y1="193" x2="526.5" y2="186"/><line x1="601.5" y1="193" x2="601.5" y2="186"/><line x1="0" y1="39.5" x2="8" y2="39.5"/><line x1="0" y1="77.5" x2="8" y2="77.5"/><line x1="0" y1="116.5" x2="8" y2="116.5"/><line x1="0" y1="154.5" x2="8" y2="154.5"/><line x1="677" y1="39.5" x2="670" y2="39.5"/><line x1="677" y1="77.5" x2="670" y2="77.5"/><line x1="677" y1="116.5" x2="670" y2="116.5"/><line x1="677" y1="154.5" x2="670" y2="154.5"/></g>
<polyline points="1.0,38.6 2.1,35.2 3.1,43.7 4.2,39.0 5.2,42.0 6.3,33.6 7.3,31.1 8.4,35.0 9.5,32.1 10.5,27.0 11.6,25.2 12.6,21.1 13.7,25.6 14.7,27.1 15.8,26.8 16.8,26.3 17.9,23.1 19.0,26.9 20.0,26.9 21.1,30.8 22.1,32.1 23.2,24.8 24.2,22.0 25.3,25.0 26.4,23.4 27.4,24.8 28.5,29.0 29.5,26.7 30.6,31.3 31.6,28.7 32.7,29.4 33.7,26.4 34.8,24.2 35.9,23.3 36.9,24.9 38.0,24.7 39.0,27.5 40.1,26.8 41.1,23.5 42.2,29.0 43.3,24.3 44.3,26.0 45.4,27.6 46.4,21.4 47.5,28.4 48.5,28.6 49.6,27.0 50.6,26.4 51.7,27.0 52.8,25.3 53.8,27.3 54.9,26.7 55.9,28.3 57.0,24.3 58.0,28.9 59.1,28.7 60.2,28.7 61.2,27.5 62.3,30.9 63.3,24.3 64.4,31.0 65.4,30.5 66.5,30.9 67.6,31.6 68.6,27.8 69.7,28.8 70.7,31.3 71.8,29.7 72.8,29.6 73.9,23.5 74.9,29.4 76.0,30.9 77.1,30.0 78.1,27.5 79.2,21.4 80.2,29.3 81.3,25.0 82.3,17.8 83.4,27.4 84.5,21.9 85.5,24.6 86.6,28.4 87.6,35.6 88.7,29.6 89.7,31.2 90.8,34.3 91.8,33.0 92.9,26.2 94.0,24.1 95.0,20.8 96.1,21.9 97.1,25.6 98.2,26.1 99.2,25.3 100.3,27.8 101.4,22.8 102.4,26.1 103.5,28.8 104.5,28.7 105.6,30.5 106.6,27.9 107.7,25.6 108.7,28.1 109.8,23.8 110.9,21.3 111.9,28.3 113.0,25.7 114.0,26.7 115.1,19.9 116.1,24.2 117.2,23.0 118.3,21.8 119.3,17.1 120.4,22.7 121.4,27.1 122.5,24.4 123.5,21.4 124.6,22.7 125.7,26.1 126.7,15.3 127.8,25.5 128.8,28.8 129.9,29.4 130.9,34.6 132.0,33.7 133.0,30.8 134.1,29.5 135.2,30.4 136.2,24.6 137.3,25.6 138.3,28.1 139.4,30.3 140.4,22.4 141.5,22.3 142.6,22.4 143.6,26.2 144.7,21.8 145.7,26.3 146.8,18.3 147.8,20.3 148.9,20.1 149.9,23.2 151.0,24.5 152.1,15.8 153.1,17.6 154.2,20.8 155.2,17.3 156.3,15.4 157.3,23.5 158.4,21.6 159.5,21.7 160.5,19.2 161.6,23.6 162.6,20.0 163.7,24.3 164.7,16.7 165.8,17.3 166.8,21.9 167.9,20.0 169.0,24.7 170.0,25.1 171.1,22.3 172.1,26.5 173.2,25.0 174.2,28.0 175.3,23.1 176.4,23.1 177.4,28.4 178.5,31.1 179.5,30.0 180.6,23.3 181.6,24.0 182.7,28.2 183.8,22.5 184.8,20.4 185.9,24.6 186.9,26.3 188.0,22.9 189.0,20.7 190.1,21.1 191.1,28.7 192.2,24.9 193.3,27.2 194.3,28.5 195.4,30.3 196.4,27.5 197.5,30.5 198.5,26.2 199.6,27.8 200.7,24.7 201.7,31.7 202.8,27.8 203.8,25.3 204.9,26.7 205.9,27.1 207.0,29.5 208.0,20.8 209.1,23.1 210.2,24.4 211.2,33.7 212.3,28.9 213.3,24.4 214.4,26.0 215.4,30.9 216.5,24.4 217.6,23.8 218.6,29.4 219.7,27.0 220.7,26.9 221.8,23.9 222.8,32.2 223.9,31.1 224.9,27.7 226.0,28.4 227.1,20.0 228.1,28.4 229.2,26.0 230.2,27.6 231.3,28.3 232.3,25.6 233.4,20.8 234.5,27.4 235.5,23.8 236.6,26.1 237.6,24.8 238.7,26.3 239.7,20.2 240.8,31.7 241.9,28.9 242.9,31.8 244.0,35.2 245.0,28.7 246.1,23.9 247.1,26.8 248.2,26.7 249.2,29.5 250.3,31.6 251.4,25.1 252.4,31.6 253.5,24.4 254.5,29.9 255.6,29.1 256.6,27.9 257.7,28.2 258.8,27.0 259.8,27.4 260.9,24.6 261.9,30.9 263.0,36.6 264.0,36.1 265.1,33.8 266.1,31.9 267.2,27.4 268.3,32.9 269.3,27.8 270.4,27.0 271.4,26.2 272.5,26.5 273.5,24.0 274.6,24.4 275.7,20.2 276.7,22.9 277.8,31.9 278.8,25.0 279.9,24.8 280.9,28.3 282.0,28.5 283.1,23.2 284.1,27.0 285.2,30.5 286.2,28.0 287.3,28.1 288.3,32.8 289.4,26.4 290.4,30.3 291.5,28.8 292.6,36.2 293.6,25.5 294.7,30.3 295.7,30.7 296.8,35.7 297.8,35.9 298.9,39.2 300.0,30.5 301.0,37.9 302.1,35.4 303.1,34.8 304.2,39.7 305.2,35.0 306.3,32.1 307.3,37.8 308.4,33.9 309.5,36.4 310.5,39.4 311.6,39.9 312.6,44.3 313.7,38.6 314.7,33.7 315.8,35.6 316.9,35.1 317.9,34.7 319.0,40.1 320.0,36.0 321.1,31.6 322.1,40.2 323.2,37.2 324.2,39.0 325.3,37.9 326.4,39.7 327.4,37.7 328.5,41.8 329.5,39.8 330.6,39.6 331.6,40.1 332.7,34.3 333.8,38.7 334.8,37.8 335.9,39.7 336.9,35.3 338.0,44.2 339.0,39.4 340.1,35.1 341.2,33.6 342.2,37.7 343.3,38.3 344.3,36.5 345.4,37.5 346.4,35.2 347.5,39.1 348.5,35.0 349.6,36.8 350.7,40.7 351.7,45.6 352.8,33.0 353.8,34.1 354.9,32.1 355.9,36.8 357.0,30.3 358.1,31.7 359.1,32.0 360.2,28.7 361.2,28.9 362.3,30.7 363.3,25.4 364.4,26.9 365.4,29.6 366.5,31.5 367.6,30.6 368.6,25.5 369.7,29.8 370.7,34.6 371.8,34.1 372.8,32.1 373.9,29.1 375.0,34.2 376.0,29.6 377.1,27.4 378.1,28.7 379.2,35.6 380.2,31.5 381.3,34.3 382.3,30.9 383.4,36.4 384.5,33.8 385.5,37.8 386.6,47.4 387.6,42.8 388.7,38.9 389.7,41.0 390.8,42.5 391.9,45.3 392.9,39.9 394.0,34.8 395.0,40.0 396.1,41.6 397.1,42.6 398.2,46.4 399.3,43.4 400.3,45.4 401.4,39.0 402.4,45.6 403.5,48.7 404.5,43.6 405.6,41.8 406.6,41.6 407.7,46.7 408.8,38.5 409.8,40.6 410.9,42.3 411.9,43.7 413.0,40.6 414.0,42.5 415.1,41.1 416.2,42.3 417.2,40.6 418.3,37.6 419.3,41.7 420.4,44.6 421.4,37.8 422.5,40.7 423.5,43.3 424.6,38.1 425.7,42.3 426.7,38.5 427.8,44.8 428.8,49.2 429.9,48.8 430.9,41.2 432.0,43.2 433.1,40.1 434.1,39.0 435.2,43.1 436.2,34.8 437.3,41.2 438.3,38.3 439.4,42.7 440.4,38.8 441.5,36.0 442.6,39.6 443.6,41.3 444.7,38.7 445.7,40.5 446.8,36.9 447.8,31.4 448.9,41.2 450.0,40.9 451.0,39.8 452.1,39.1 453.1,42.6 454.2,38.0 455.2,37.0 456.3,38.9 457.4,43.2 458.4,35.0 459.5,42.3 460.5,36.6 461.6,34.4 462.6,41.3 463.7,36.8 464.7,32.0 465.8,35.3 466.9,39.0 467.9,39.9 469.0,34.6 470.0,37.5 471.1,39.2 472.1,34.4 473.2,37.8 474.3,35.8 475.3,34.4 476.4,34.1 477.4,34.9 478.5,34.3 479.5,32.0 480.6,32.3 481.6,37.2 482.7,35.0 483.8,36.9 484.8,38.7 485.9,37.5 486.9,43.0 488.0,33.2 489.0,39.1 490.1,36.4 491.2,43.6 492.2,43.4 493.3,31.3 494.3,35.8 495.4,41.4 496.4,41.7 497.5,41.9 498.5,39.3 499.6,41.5 500.7,43.3 501.7,41.3 502.8,43.7 503.8,33.1 504.9,41.8 505.9,36.9 507.0,43.6" fill="none" stroke="#ff0000" stroke-width="3.3" stroke-linejoin="miter" stroke-miterlimit="2.5"/>
<polyline points="1.0,148.7 2.1,157.5 3.1,150.2 4.2,155.3 5.2,152.8 6.3,148.9 7.3,151.0 8.4,149.9 9.5,149.5 10.5,153.8 11.6,153.0 12.6,148.4 13.7,146.9 14.7,150.9 15.8,149.7 16.8,153.4 17.9,159.8 19.0,153.4 20.0,151.1 21.1,150.7 22.1,148.5 23.2,148.1 24.2,147.8 25.3,150.0 26.4,149.3 27.4,153.1 28.5,148.2 29.5,148.5 30.6,144.6 31.6,154.7 32.7,150.5 33.7,154.7 34.8,151.4 35.9,153.9 36.9,148.2 38.0,151.1 39.0,158.3 40.1,144.3 41.1,152.5 42.2,155.0 43.3,150.5 44.3,151.8 45.4,153.5 46.4,147.0 47.5,150.5 48.5,146.2 49.6,146.9 50.6,146.7 51.7,148.3 52.8,148.7 53.8,149.5 54.9,142.7 55.9,154.4 57.0,151.6 58.0,149.9 59.1,146.0 60.2,146.2 61.2,148.2 62.3,148.1 63.3,140.5 64.4,148.6 65.4,155.9 66.5,139.2 67.6,148.8 68.6,148.1 69.7,147.1 70.7,151.9 71.8,143.0 72.8,148.0 73.9,153.2 74.9,147.7 76.0,146.5 77.1,147.7 78.1,145.5 79.2,152.5 80.2,143.6 81.3,149.3 82.3,141.2 83.4,147.3 84.5,144.7 85.5,135.5 86.6,144.3 87.6,141.1 88.7,143.8 89.7,150.8 90.8,141.8 91.8,142.9 92.9,151.1 94.0,146.3 95.0,151.0 96.1,145.6 97.1,141.4 98.2,143.8 99.2,147.6 100.3,146.1 101.4,142.9 102.4,143.3 103.5,142.7 104.5,141.4 105.6,150.1 106.6,143.7 107.7,140.2 108.7,142.6 109.8,147.1 110.9,147.0 111.9,144.2 113.0,142.4 114.0,145.0 115.1,139.9 116.1,140.9 117.2,148.9 118.3,145.0 119.3,147.4 120.4,150.6 121.4,149.4 122.5,147.1 123.5,154.3 124.6,149.2 125.7,144.8 126.7,147.7 127.8,146.7 128.8,142.3 129.9,144.6 130.9,143.2 132.0,136.4 133.0,142.6 134.1,141.9 135.2,141.3 136.2,137.4 137.3,141.6 138.3,142.8 139.4,143.4 140.4,139.3 141.5,145.4 142.6,139.1 143.6,142.7 144.7,147.4 145.7,140.6 146.8,141.1 147.8,146.2 148.9,140.9 149.9,141.0 151.0,142.8 152.1,145.2 153.1,134.4 154.2,138.6 155.2,137.2 156.3,136.9 157.3,137.2 158.4,137.3 159.5,141.5 160.5,137.7 161.6,140.4 162.6,141.3 163.7,138.5 164.7,141.7 165.8,147.5 166.8,143.1 167.9,140.1 169.0,142.2 170.0,139.6 171.1,144.4 172.1,146.5 173.2,140.7 174.2,142.9 175.3,147.6 176.4,141.3 177.4,143.7 178.5,139.8 179.5,141.5 180.6,142.4 181.6,152.1 182.7,143.9 183.8,144.0 184.8,144.8 185.9,145.9 186.9,148.2 188.0,145.3 189.0,151.4 190.1,145.1 191.1,149.2 192.2,144.6 193.3,145.1 194.3,138.0 195.4,142.8 196.4,143.4 197.5,143.1 198.5,136.0 199.6,146.1 200.7,142.7 201.7,142.1 202.8,142.7 203.8,142.8 204.9,145.1 205.9,139.4 207.0,141.2 208.0,145.7 209.1,144.9 210.2,143.3 211.2,142.8 212.3,141.7 213.3,144.4 214.4,149.0 215.4,141.6 216.5,150.5 217.6,148.0 218.6,144.3 219.7,148.8 220.7,141.6 221.8,141.1 222.8,142.4 223.9,145.1 224.9,145.2 226.0,144.2 227.1,146.0 228.1,137.8 229.2,146.2 230.2,138.7 231.3,141.0 232.3,141.7 233.4,139.1 234.5,139.0 235.5,140.2 236.6,143.9 237.6,146.0 238.7,146.7 239.7,141.8 240.8,142.9 241.9,142.9 242.9,147.5 244.0,138.9 245.0,150.0 246.1,144.3 247.1,143.1 248.2,147.7 249.2,150.3 250.3,147.3 251.4,150.2 252.4,148.2 253.5,152.4 254.5,153.0 255.6,148.9 256.6,154.1 257.7,150.1 258.8,150.8 259.8,147.7 260.9,150.1 261.9,154.4 263.0,147.9 264.0,154.4 265.1,153.5 266.1,152.7 267.2,143.4 268.3,150.0 269.3,151.7 270.4,145.8 271.4,148.5 272.5,140.4 273.5,150.4 274.6,145.6 275.7,151.0 276.7,141.5 277.8,149.4 278.8,146.2 279.9,149.2 280.9,142.7 282.0,143.6 283.1,153.3 284.1,142.3 285.2,142.3 286.2,145.3 287.3,143.2 288.3,150.8 289.4,153.3 290.4,145.4 291.5,141.7 292.6,152.2 293.6,152.5 294.7,151.0 295.7,152.7 296.8,146.7 297.8,149.2 298.9,145.4 300.0,145.8 301.0,154.9 302.1,149.6 303.1,160.6 304.2,153.4 305.2,151.1 306.3,156.7 307.3,160.6 308.4,156.9 309.5,150.7 310.5,156.4 311.6,159.3 312.6,153.2 313.7,152.5 314.7,158.9 315.8,155.8 316.9,151.6 317.9,154.5 319.0,153.5 320.0,156.9 321.1,155.8 322.1,158.9 323.2,157.5 324.2,149.5 325.3,156.3 326.4,157.7 327.4,156.7 328.5,159.4 329.5,154.4 330.6,153.5 331.6,159.5 332.7,153.0 333.8,148.9 334.8,159.6 335.9,153.7 336.9,154.4 338.0,150.8 339.0,150.9 340.1,151.6 341.2,154.5 342.2,157.2 343.3,148.4 344.3,157.9 345.4,152.2 346.4,152.4 347.5,158.9 348.5,156.5 349.6,150.6 350.7,162.0 351.7,152.8 352.8,157.5 353.8,157.3 354.9,161.7 355.9,154.4 357.0,159.3 358.1,154.2 359.1,160.4 360.2,153.4 361.2,153.4 362.3,160.9 363.3,155.8 364.4,155.3 365.4,162.0 366.5,154.9 367.6,150.1 368.6,155.4 369.7,148.6 370.7,155.7 371.8,154.9 372.8,148.5 373.9,147.6 375.0,149.9 376.0,150.2 377.1,146.9 378.1,153.4 379.2,145.2 380.2,151.1 381.3,151.4 382.3,152.4 383.4,154.6 384.5,150.0 385.5,156.7 386.6,154.3 387.6,153.2 388.7,151.9 389.7,152.7 390.8,158.1 391.9,154.6 392.9,158.7 394.0,162.6 395.0,163.2 396.1,164.6 397.1,157.3 398.2,154.6 399.3,161.9 400.3,159.2 401.4,161.6 402.4,157.5 403.5,161.1 404.5,160.0 405.6,159.9 406.6,160.2 407.7,160.3 408.8,159.6 409.8,160.3 410.9,163.7 411.9,158.7 413.0,166.0 414.0,160.3 415.1,164.4 416.2,160.8 417.2,159.9 418.3,168.3 419.3,159.7 420.4,156.6 421.4,159.3 422.5,160.8 423.5,168.8 424.6,161.2 425.7,164.3 426.7,156.5 427.8,160.5 428.8,161.9 429.9,165.4 430.9,156.9 432.0,160.8 433.1,160.4 434.1,155.9 435.2,159.8 436.2,159.9 437.3,152.0 438.3,161.9 439.4,160.7 440.4,157.4 441.5,154.2 442.6,163.2 443.6,158.8 444.7,161.5 445.7,163.8 446.8,157.5 447.8,162.6 448.9,159.7 450.0,160.0 451.0,160.0 452.1,160.5 453.1,163.8 454.2,159.7 455.2,157.9 456.3,157.2 457.4,159.1 458.4,154.6 459.5,155.7 460.5,156.4 461.6,154.4 462.6,155.3 463.7,154.1 464.7,163.4 465.8,160.9 466.9,158.2 467.9,157.0 469.0,165.1 470.0,159.6 471.1,159.0 472.1,160.3 473.2,160.1 474.3,163.9 475.3,159.3 476.4,165.7 477.4,155.4 478.5,160.0 479.5,154.0 480.6,163.2 481.6,155.6 482.7,156.7 483.8,159.7 484.8,161.0 485.9,152.8 486.9,156.2 488.0,153.2 489.0,159.1 490.1,158.2 491.2,157.8 492.2,156.7 493.3,158.5 494.3,157.5 495.4,160.8 496.4,164.4 497.5,152.8 498.5,158.7 499.6,157.2 500.7,160.5 501.7,155.2 502.8,157.6 503.8,155.0 504.9,160.2 505.9,157.7 507.0,157.4" fill="none" stroke="#0072bd" stroke-width="1.0" stroke-linejoin="miter" stroke-miterlimit="2.5"/>
</svg>
<div class="a" style="left:0;top:238px;width:45px;height:206px;overflow:hidden">
<div class="yl" style="top:4.0px">2.5</div><div class="yl" style="top:42.6px">2</div><div class="yl" style="top:81.2px">1.5</div><div class="yl" style="top:119.8px">1</div><div class="yl" style="top:158.4px">0.5</div><div class="yl" style="top:197.0px">0</div>
</div>
<div class="a" style="left:621px;top:260px;width:89px;height:24px;background:#fff;border:1px solid #262626"></div>
<div class="a" style="left:630px;top:271px;width:41px;height:1.3px;background:#0072bd"></div>
<div class="a" style="left:674px;top:265px;font-size:12px;color:#000;line-height:16px;white-space:nowrap">Cell 3</div>
</body></html>
